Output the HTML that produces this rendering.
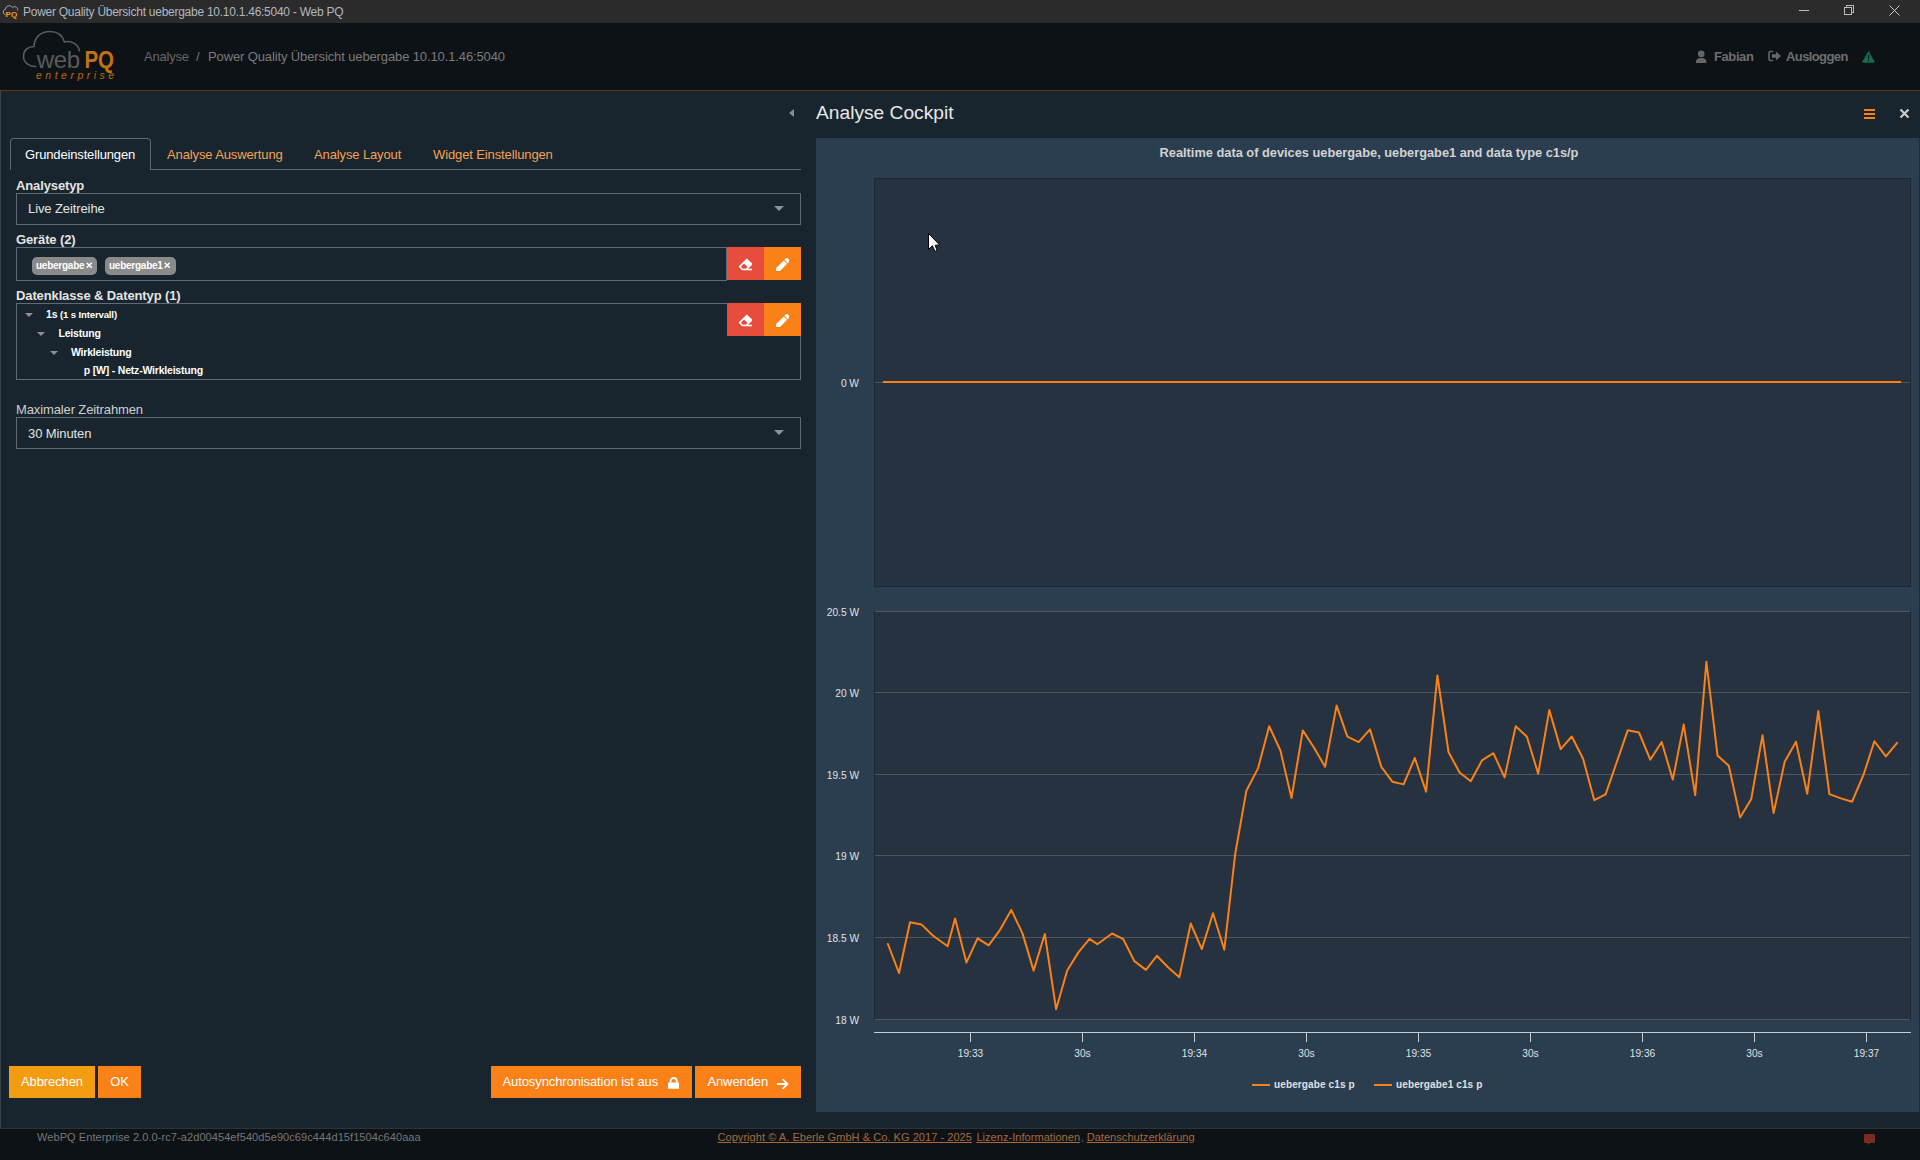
<!DOCTYPE html>
<html><head><meta charset="utf-8">
<style>
*{box-sizing:border-box;margin:0;padding:0}
html,body{width:1920px;height:1160px;overflow:hidden;background:#18242e;font-family:"Liberation Sans",sans-serif;position:relative}
.a{position:absolute;white-space:nowrap}
.lbl{color:#e4e4e4;font-weight:bold;font-size:13px;letter-spacing:-0.12px}
.box{border:1px solid #5f6a75}
.txt{color:#e4e4e4;font-size:13px;letter-spacing:-0.1px}
.tab{font-size:13px;color:#f4a352;letter-spacing:-0.12px}
.btn{background:#fa8118;color:#fff;font-size:13px;letter-spacing:-0.1px}
.tag{background:#8a8a8a;border-radius:5px;color:#fff;font-weight:bold;font-size:10px;height:18px;line-height:18px;letter-spacing:-0.25px}
.tree{color:#fff;font-weight:bold;font-size:10.5px;letter-spacing:-0.2px}
.caret{width:0;height:0;border-left:5px solid transparent;border-right:5px solid transparent;border-top:5px solid #8a939c}
.tcaret{width:0;height:0;border-left:4px solid transparent;border-right:4px solid transparent;border-top:4.5px solid #909090}
.foot{font-size:11px;color:#a86a3a;text-decoration:underline;letter-spacing:0.05px}
</style></head><body>
<!-- title bar -->
<div class="a" style="left:0;top:0;width:1920px;height:23px;background:#2b2b2b">
  <svg class="a" style="left:2px;top:3px" width="20" height="18" viewBox="0 0 20 18">
    <path d="M3.5 11.5 C0.5 11.5 0.5 6.5 3.5 6.5 C3.5 2.5 8.5 1.5 10.5 4.5 C12.5 2.5 16.5 4.5 15.5 7.5" fill="none" stroke="#aaa" stroke-width="1"/>
    <text x="3.6" y="13.9" font-family="Liberation Sans" font-weight="bold" font-size="8" fill="#f39c12">PQ</text>
  </svg>
  <div class="a" style="left:23px;top:4.6px;font-size:12px;color:#b0b8c0;letter-spacing:-0.26px">Power Quality Übersicht uebergabe 10.10.1.46:5040 - Web PQ</div>
  <div class="a" style="left:1799px;top:10px;width:10px;height:1px;background:#bbb"></div>
  <div class="a" style="left:1846px;top:5px;width:8px;height:8px;border:1px solid #bbb"></div>
  <div class="a" style="left:1844px;top:7px;width:8px;height:8px;border:1px solid #bbb;background:#2b2b2b"></div>
  <svg class="a" style="left:1889px;top:5px" width="11" height="11" viewBox="0 0 11 11"><path d="M0.5 0.5L10.5 10.5M10.5 0.5L0.5 10.5" stroke="#ccc" stroke-width="1"/></svg>
</div>
<!-- header -->
<div class="a" style="left:0;top:23px;width:1920px;height:67px;background:#0d1216">
  <svg class="a" style="left:20px;top:6px" width="100" height="60" viewBox="20 29 100 60">
    <path d="M36.5 66.5 C30 67 23.5 63 23.5 56.5 C23.5 50 28 46.5 34 46.5 C34.5 37 41 31.5 50 31.5 C57 31.5 62.5 35.5 64.5 42 C72 40 79 45 79.5 51.5" fill="none" stroke="#5a5a5a" stroke-width="1.6"/>
    <text x="36.8" y="68" font-family="Liberation Sans" font-size="24" fill="#5a5a5a" letter-spacing="-0.4">web</text>
    <text x="84.5" y="68" font-family="Liberation Sans" font-weight="bold" font-size="23.5" fill="#c27212" transform="translate(84.5 68) scale(0.87 1) translate(-84.5 -68)">PQ</text>
    <text x="36" y="79" font-family="Liberation Sans" font-style="italic" font-size="10.5" fill="#b86c10" letter-spacing="3.5">enterprise</text>
  </svg>
  <div class="a" style="left:144px;top:26px;font-size:13px;color:#666;letter-spacing:-0.2px">Analyse</div>
  <div class="a" style="left:196px;top:26px;font-size:13px;color:#777">/</div>
  <div class="a" style="left:208px;top:26px;font-size:13px;color:#7a7a7a;letter-spacing:-0.12px">Power Quality Übersicht uebergabe 10.10.1.46:5040</div>
  <svg class="a" style="left:1695px;top:26.6px" width="13" height="14" viewBox="0 0 13 14">
    <circle cx="6.2" cy="3.9" r="3.3" fill="#666"/>
    <path d="M1 13 C0.8 9.2 3 8 6.2 8 C9.4 8 11.6 9.2 11.4 13 Z" fill="#666"/>
  </svg>
  <div class="a" style="left:1714px;top:26px;font-size:13px;color:#6e6e6e;font-weight:bold;letter-spacing:-0.4px">Fabian</div>
  <svg class="a" style="left:1768px;top:27.3px" width="14" height="12" viewBox="0 0 14 12">
    <path d="M5 1.5 H2.5 Q1 1.5 1 3 V9 Q1 10.5 2.5 10.5 H5" fill="none" stroke="#666" stroke-width="1.6"/>
    <path d="M4 4.3 H8 V1.5 L13 6 L8 10.5 V7.7 H4 Z" fill="#666"/>
  </svg>
  <div class="a" style="left:1786px;top:26px;font-size:13px;color:#6e6e6e;font-weight:bold;letter-spacing:-0.6px">Ausloggen</div>
  <svg class="a" style="left:1862px;top:27.5px" width="13" height="12" viewBox="0 0 13 12">
    <path d="M6.5 0.6 L12.4 11.2 H0.6 Z" fill="#157050" stroke="#157050" stroke-width="0.8" stroke-linejoin="round"/>
    <rect x="5.9" y="3.8" width="1.3" height="4" fill="#0d1216"/>
    <rect x="5.9" y="8.7" width="1.3" height="1.3" fill="#0d1216"/>
  </svg>
</div>
<div class="a" style="left:0;top:90px;width:1920px;height:1px;background:#5e3614"></div>
<!-- main -->
<div class="a" style="left:0;top:91px;width:1920px;height:1037px;background:#18242e">
  <div class="a" style="left:0;top:0;width:1px;height:1037px;background:#3a4149"></div>
  <div class="a" style="left:789px;top:18px;width:0;height:0;border-top:4px solid transparent;border-bottom:4px solid transparent;border-right:5px solid #8a8a8a"></div>
  <!-- tabs -->
  <div class="a" style="left:10px;top:47px;width:141px;height:32px;border:1px solid #5d6873;border-bottom:none;border-radius:4px 4px 0 0;background:#18242e"></div>
  <div class="a" style="left:150px;top:78px;width:651px;height:1px;background:#5d6873"></div>
  <div class="a tab" style="left:25px;top:56px;color:#fff;letter-spacing:-0.15px">Grundeinstellungen</div>
  <div class="a tab" style="left:167px;top:56px">Analyse Auswertung</div>
  <div class="a tab" style="left:314px;top:56px">Analyse Layout</div>
  <div class="a tab" style="left:433px;top:56px">Widget Einstellungen</div>
  <!-- Analysetyp -->
  <div class="a lbl" style="left:16px;top:87px">Analysetyp</div>
  <div class="a box" style="left:16px;top:102px;width:785px;height:32px"></div>
  <div class="a txt" style="left:28px;top:110px">Live Zeitreihe</div>
  <div class="a caret" style="left:774px;top:115px"></div>
  <!-- Geraete -->
  <div class="a lbl" style="left:16px;top:141px">Geräte (2)</div>
  <div class="a box" style="left:16px;top:156px;width:711px;height:34px"></div>
  <div class="a tag" style="left:32px;top:166px;width:65px;padding-left:4px;line-height:17px">uebergabe</div><svg class="a" style="left:86px;top:171.3px" width="6.5" height="6.5" viewBox="0 0 6.5 6.5"><path d="M0.7 0.7L5.8 5.8M5.8 0.7L0.7 5.8" stroke="#fff" stroke-width="1.5"/></svg>
  <div class="a tag" style="left:105px;top:166px;width:71px;padding-left:4px;line-height:17px">uebergabe1</div><svg class="a" style="left:163.7px;top:171.3px" width="6.5" height="6.5" viewBox="0 0 6.5 6.5"><path d="M0.7 0.7L5.8 5.8M5.8 0.7L0.7 5.8" stroke="#fff" stroke-width="1.5"/></svg>
  <div class="a" style="left:727px;top:156px;width:37px;height:33px;background:#e74c3c"></div>
  <div class="a" style="left:764px;top:156px;width:37px;height:33px;background:#fa8118"></div>
  <svg class="a" style="left:739px;top:166.89999999999998px" width="13.2" height="13.2" viewBox="0 0 512 512"><path d="M497.941 273.941c18.745-18.745 18.745-49.137 0-67.882l-160-160c-18.745-18.745-49.136-18.746-67.883 0l-256 256c-18.745 18.745-18.745 49.137 0 67.882l96 96A48.004 48.004 0 0 0 144 480h356c6.627 0 12-5.373 12-12v-40c0-6.627-5.373-12-12-12H355.883l142.058-142.059zm-302.627-62.627l137.373 137.373L265.373 416H150.628l-80-80 124.686-124.686z" fill="#fff"/></svg>
  <svg class="a" style="left:775.7px;top:166.60000000000002px" width="13.6" height="13.6" viewBox="0 0 512 512"><path d="M290.74 93.24l128.02 128.02-277.99 277.99-114.14 12.6C11.35 513.54-1.56 500.62.14 485.34l12.7-114.22 277.9-277.88zm207.2-19.06l-60.11-60.11c-18.75-18.75-49.16-18.75-67.91 0l-56.55 56.55 128.02 128.02 56.55-56.55c18.75-18.76 18.75-49.16 0-67.91z" fill="#fff"/></svg>
  <!-- Datenklasse -->
  <div class="a lbl" style="left:16px;top:197px">Datenklasse &amp; Datentyp (1)</div>
  <div class="a box" style="left:16px;top:212px;width:785px;height:77px"></div>
  <div class="a" style="left:727px;top:212px;width:37px;height:33px;background:#e74c3c"></div>
  <div class="a" style="left:764px;top:212px;width:37px;height:33px;background:#fa8118"></div>
  <svg class="a" style="left:739px;top:222.89999999999998px" width="13.2" height="13.2" viewBox="0 0 512 512"><path d="M497.941 273.941c18.745-18.745 18.745-49.137 0-67.882l-160-160c-18.745-18.745-49.136-18.746-67.883 0l-256 256c-18.745 18.745-18.745 49.137 0 67.882l96 96A48.004 48.004 0 0 0 144 480h356c6.627 0 12-5.373 12-12v-40c0-6.627-5.373-12-12-12H355.883l142.058-142.059zm-302.627-62.627l137.373 137.373L265.373 416H150.628l-80-80 124.686-124.686z" fill="#fff"/></svg>
  <svg class="a" style="left:775.7px;top:222.60000000000002px" width="13.6" height="13.6" viewBox="0 0 512 512"><path d="M290.74 93.24l128.02 128.02-277.99 277.99-114.14 12.6C11.35 513.54-1.56 500.62.14 485.34l12.7-114.22 277.9-277.88zm207.2-19.06l-60.11-60.11c-18.75-18.75-49.16-18.75-67.91 0l-56.55 56.55 128.02 128.02 56.55-56.55c18.75-18.76 18.75-49.16 0-67.91z" fill="#fff"/></svg>
  <div class="a tcaret" style="left:24.8px;top:222.3px"></div>
  <div class="a tree" style="left:46px;top:217px">1s <span style="font-size:9.6px;letter-spacing:-0.15px">(1 s Intervall)</span></div>
  <div class="a tcaret" style="left:36.6px;top:241.3px"></div>
  <div class="a tree" style="left:58.5px;top:236px">Leistung</div>
  <div class="a tcaret" style="left:49.6px;top:260.4px"></div>
  <div class="a tree" style="left:71px;top:255.39999999999998px">Wirkleistung</div>
  <div class="a tree" style="left:83.8px;top:272.8px">p [W] - Netz-Wirkleistung</div>
  <!-- Zeitrahmen -->
  <div class="a" style="left:16px;top:311px;font-size:13px;color:#d0d0d0;letter-spacing:-0.12px">Maximaler Zeitrahmen</div>
  <div class="a box" style="left:16px;top:326px;width:785px;height:32px"></div>
  <div class="a txt" style="left:28px;top:335px">30 Minuten</div>
  <div class="a caret" style="left:774px;top:339px"></div>
  <!-- bottom buttons -->
  <div class="a btn" style="left:9px;top:975px;width:86px;height:32px;line-height:32px;background:#f39c12;text-align:center">Abbrechen</div>
  <div class="a btn" style="left:98px;top:975px;width:43px;height:32px;line-height:32px;text-align:center">OK</div>
  <div class="a btn" style="left:491px;top:975px;width:201px;height:32px;line-height:32px;padding-left:11.5px">Autosynchronisation ist aus</div>
  <svg class="a" style="left:667.8px;top:986.3px" width="11.3" height="11.7" viewBox="0 0 11.3 11.7">
    <path d="M2.6 5.6 V4 A3.05 3.05 0 0 1 8.7 4 V5.6" fill="none" stroke="#fff" stroke-width="1.9"/>
    <rect x="0" y="5.5" width="11.3" height="6.2" rx="0.6" fill="#fff"/>
  </svg>
  <div class="a btn" style="left:695px;top:975px;width:106px;height:32px;line-height:32px;padding-left:12.4px">Anwenden</div>
  <svg class="a" style="left:776px;top:986.5999999999999px" width="13" height="12" viewBox="0 0 13 12">
    <path d="M1 6 H11.5 M6.6 1.2 L11.5 6 L6.6 10.8" fill="none" stroke="#fff" stroke-width="1.8" stroke-linejoin="miter"/>
  </svg>
  <!-- right header -->
  <div class="a" style="left:816px;top:11px;font-size:19.2px;color:#e8e8e8">Analyse Cockpit</div>
  <div class="a" style="left:1864px;top:18px;width:11px;height:2px;background:#fa8118"></div>
  <div class="a" style="left:1864px;top:22px;width:11px;height:2px;background:#fa8118"></div>
  <div class="a" style="left:1864px;top:26px;width:11px;height:2px;background:#fa8118"></div>
  <svg class="a" style="left:1899px;top:17px" width="11" height="11" viewBox="0 0 11 11"><path d="M1.5 1.5L9.5 9.5M9.5 1.5L1.5 9.5" stroke="#ccc" stroke-width="2.2"/></svg>
  <div class="a" style="left:816px;top:47px;width:1104px;height:974px;background:#2b3e50;border-right:1px solid #1f2b36"></div>
</div>
<!-- footer -->
<div class="a" style="left:0;top:1128px;width:1920px;height:32px;background:#0d1216;border-top:1px solid #2e3338">
  <div class="a" style="left:37px;top:2px;font-size:11px;color:#777;letter-spacing:0.08px">WebPQ Enterprise 2.0.0-rc7-a2d00454ef540d5e90c69c444d15f1504c640aaa</div>
  <div class="a foot" style="left:717.5px;top:2px">Copyright © A. Eberle GmbH &amp; Co. KG 2017 - 2025</div>
  <div class="a foot" style="left:976.4px;top:2px">Lizenz-Informationen</div>
  <div class="a" style="left:1081px;top:2px;font-size:11px;color:#3a6a9a">,</div>
  <div class="a foot" style="left:1086.7px;top:2px">Datenschutzerklärung</div>
  <svg class="a" style="left:1863px;top:4px" width="13" height="13" viewBox="0 0 13 13"><rect x="1" y="1" width="11" height="9" rx="1.2" fill="#7c2a22"/><path d="M4.3 9.5 L5.3 12 L7.3 9.5 Z" fill="#7c2a22"/></svg>
</div>
<svg class="a" style="left:0;top:0" width="1920" height="1160" viewBox="0 0 1920 1160">
<defs><filter id="sh" x="-2%" y="-2%" width="104%" height="104%"><feDropShadow dx="1" dy="1" stdDeviation="1" flood-color="#000" flood-opacity="0.35"/></filter></defs>
<text x="1369" y="157" text-anchor="middle" font-family="Liberation Sans" font-weight="bold" font-size="12.8" fill="#d2d2d2">Realtime data of devices uebergabe, uebergabe1 and data type c1s/p</text>
<rect x="872.5" y="176.5" width="1040" height="412" fill="none" stroke="#2a3e54" stroke-width="1"/>
<rect x="874.5" y="178.5" width="1036" height="408" fill="#26323f" stroke="#21272e" stroke-width="1"/>
<rect x="875" y="382" width="1035" height="1" fill="#51565e"/>
<text x="859" y="387" text-anchor="end" font-family="Liberation Sans" font-size="10.2" fill="#e0e0e0">0 W</text>
<path d="M883 382 H1901" stroke="#f98118" stroke-width="2" fill="none"/>
<rect x="872.5" y="609.5" width="1040" height="412" fill="none" stroke="#2a3e54" stroke-width="1"/>
<rect x="874.5" y="611.5" width="1036" height="408" fill="#26323f" stroke="#21272e" stroke-width="1"/>
<rect x="875" y="611" width="1035" height="1" fill="#51565e"/>
<text x="859" y="615.5" text-anchor="end" font-family="Liberation Sans" font-size="10.2" fill="#e0e0e0">20.5 W</text>
<rect x="875" y="692" width="1035" height="1" fill="#51565e"/>
<text x="859" y="696.5" text-anchor="end" font-family="Liberation Sans" font-size="10.2" fill="#e0e0e0">20 W</text>
<rect x="875" y="774" width="1035" height="1" fill="#51565e"/>
<text x="859" y="778.5" text-anchor="end" font-family="Liberation Sans" font-size="10.2" fill="#e0e0e0">19.5 W</text>
<rect x="875" y="855" width="1035" height="1" fill="#51565e"/>
<text x="859" y="859.5" text-anchor="end" font-family="Liberation Sans" font-size="10.2" fill="#e0e0e0">19 W</text>
<rect x="875" y="937" width="1035" height="1" fill="#51565e"/>
<text x="859" y="941.5" text-anchor="end" font-family="Liberation Sans" font-size="10.2" fill="#e0e0e0">18.5 W</text>
<rect x="875" y="1019" width="1035" height="1" fill="#51565e"/>
<text x="859" y="1023.5" text-anchor="end" font-family="Liberation Sans" font-size="10.2" fill="#e0e0e0">18 W</text>
<path d="M887.9 944.0 L899.0 973.0 L910.0 922.3 L921.4 924.4 L932.8 935.5 L947.6 946.2 L955.1 918.6 L966.4 962.6 L977.6 938.4 L988.7 945.3 L1000.2 929.6 L1011.3 909.9 L1022.5 933.4 L1033.6 970.6 L1044.8 934.0 L1056.1 1009.2 L1067.2 970.5 L1078.4 952.4 L1089.5 938.9 L1097.3 944.2 L1112.1 933.5 L1123.3 939.2 L1134.4 961.1 L1145.9 969.9 L1156.9 955.8 L1168.0 967.2 L1179.4 977.2 L1190.7 923.5 L1201.8 949.1 L1213.0 913.2 L1224.3 949.7 L1235.2 854.0 L1246.4 790.7 L1258.1 768.1 L1269.2 726.2 L1280.4 750.5 L1291.5 798.0 L1302.8 730.4 L1313.9 747.5 L1325.1 766.8 L1336.6 705.6 L1347.4 736.7 L1358.7 742.1 L1370.0 729.4 L1381.3 766.8 L1392.4 781.7 L1403.6 784.4 L1414.8 758.0 L1426.1 791.6 L1437.4 675.5 L1448.5 752.0 L1459.6 772.5 L1470.8 781.3 L1482.0 760.4 L1493.4 753.2 L1504.6 777.4 L1515.7 726.2 L1526.9 736.7 L1538.2 773.7 L1549.3 710.1 L1560.7 749.1 L1571.8 736.5 L1583.1 758.8 L1594.3 800.2 L1605.6 794.4 L1627.8 730.2 L1639.0 732.5 L1650.3 759.7 L1661.7 742.0 L1672.8 779.6 L1683.7 724.6 L1695.2 795.2 L1706.4 661.8 L1717.5 755.4 L1728.8 765.8 L1740.1 817.4 L1751.3 798.9 L1762.5 735.3 L1773.6 813.1 L1784.7 761.8 L1796.0 741.7 L1807.2 793.8 L1818.3 711.1 L1829.4 794.1 L1841.0 798.4 L1852.1 801.7 L1863.6 774.5 L1874.4 741.3 L1885.9 756.4 L1897.1 742.9" stroke="#f98118" stroke-width="2" fill="none" stroke-linejoin="round" stroke-linecap="round"/>
<rect x="874" y="1032" width="1037" height="1" fill="#c8ccd0"/>
<rect x="970.0" y="1033" width="1" height="9" fill="#c8ccd0"/>
<text x="970.5" y="1057" text-anchor="middle" font-family="Liberation Sans" font-size="10.1" fill="#e0e0e0">19:33</text>
<rect x="1082.0" y="1033" width="1" height="9" fill="#c8ccd0"/>
<text x="1082.5" y="1057" text-anchor="middle" font-family="Liberation Sans" font-size="10.1" fill="#e0e0e0">30s</text>
<rect x="1194.0" y="1033" width="1" height="9" fill="#c8ccd0"/>
<text x="1194.5" y="1057" text-anchor="middle" font-family="Liberation Sans" font-size="10.1" fill="#e0e0e0">19:34</text>
<rect x="1306.0" y="1033" width="1" height="9" fill="#c8ccd0"/>
<text x="1306.5" y="1057" text-anchor="middle" font-family="Liberation Sans" font-size="10.1" fill="#e0e0e0">30s</text>
<rect x="1418.0" y="1033" width="1" height="9" fill="#c8ccd0"/>
<text x="1418.5" y="1057" text-anchor="middle" font-family="Liberation Sans" font-size="10.1" fill="#e0e0e0">19:35</text>
<rect x="1530.0" y="1033" width="1" height="9" fill="#c8ccd0"/>
<text x="1530.5" y="1057" text-anchor="middle" font-family="Liberation Sans" font-size="10.1" fill="#e0e0e0">30s</text>
<rect x="1642.0" y="1033" width="1" height="9" fill="#c8ccd0"/>
<text x="1642.5" y="1057" text-anchor="middle" font-family="Liberation Sans" font-size="10.1" fill="#e0e0e0">19:36</text>
<rect x="1754.0" y="1033" width="1" height="9" fill="#c8ccd0"/>
<text x="1754.5" y="1057" text-anchor="middle" font-family="Liberation Sans" font-size="10.1" fill="#e0e0e0">30s</text>
<rect x="1866.0" y="1033" width="1" height="9" fill="#c8ccd0"/>
<text x="1866.5" y="1057" text-anchor="middle" font-family="Liberation Sans" font-size="10.1" fill="#e0e0e0">19:37</text>
<rect x="1252" y="1084" width="18" height="2" fill="#f98118"/>
<text x="1274" y="1088" font-family="Liberation Sans" font-weight="bold" font-size="10" letter-spacing="0.12" fill="#e0e0e0">uebergabe c1s p</text>
<rect x="1374" y="1084" width="18" height="2" fill="#f98118"/>
<text x="1396" y="1088" font-family="Liberation Sans" font-weight="bold" font-size="10" letter-spacing="0.12" fill="#e0e0e0">uebergabe1 c1s p</text>
<path d="M928.5 233.5 V249.3 L932.4 245.8 L935.1 251.4 L937.1 250.5 L935.2 245.3 L939.7 244.9 Z" fill="#fff" stroke="#000" stroke-width="1"/>
</svg>
</body></html>
